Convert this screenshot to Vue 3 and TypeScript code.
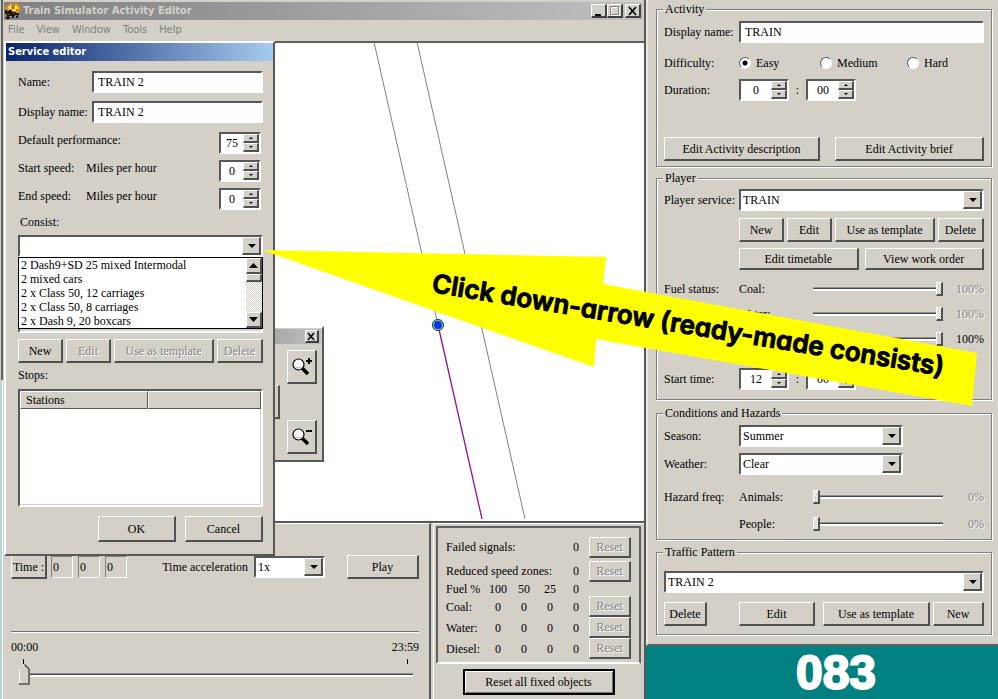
<script setup lang="ts">
import { ref } from 'vue'

interface FuelRow {
  name: string
  counts: number[]
}

interface SliderRow {
  id: string
  name: string
  value: number
  disabled: boolean
}

const menus = ['File', 'View', 'Window', 'Tools', 'Help']

const serviceName = ref('TRAIN 2')
const serviceDisplayName = ref('TRAIN 2')
const performance = ref('75')
const startSpeed = ref('0')
const endSpeed = ref('0')
const consists = [
  '2 Dash9+SD 25 mixed Intermodal',
  '2 mixed cars',
  '2 x Class 50, 12 carriages',
  '2 x Class 50, 8 carriages',
  '2 x Dash 9, 20 boxcars',
]

const clock = ref(['0', '0', '0'])
const timeline = ref(0)

const fuelLevels = [100, 50, 25, 0]
const fuelRows: FuelRow[] = [
  { name: 'Coal:', counts: [0, 0, 0, 0] },
  { name: 'Water:', counts: [0, 0, 0, 0] },
  { name: 'Diesel:', counts: [0, 0, 0, 0] },
]

const activityName = ref('TRAIN')
const difficulty = ref('Easy')
const difficulties = ['Easy', 'Medium', 'Hard']
const durationHours = ref('0')
const durationMinutes = ref('00')
const startHours = ref('12')
const startMinutes = ref('00')

const fuelStatus = ref<SliderRow[]>([
  { id: 'coal', name: 'Coal:', value: 100, disabled: true },
  { id: 'water', name: 'Water:', value: 100, disabled: true },
  { id: 'diesel', name: 'Diesel:', value: 100, disabled: false },
])
const hazards = ref<SliderRow[]>([
  { id: 'animals', name: 'Animals:', value: 0, disabled: true },
  { id: 'people', name: 'People:', value: 0, disabled: true },
])
</script>

<template>
  <div class="desktop">
    <div class="edge" aria-hidden="true">
      <div class="edge-upper"></div>
      <div class="edge-lower"></div>
    </div>

    <main class="editor">
      <header class="titlebar">
        <svg class="app-icon" width="18" height="18" viewBox="0 0 18 18" aria-hidden="true">
          <path d="M2 3h3V1h3v2h2V1h4v2h2v2h1v4h-2v2H3V9H1V5h1z" fill="#d98a1c" />
          <path d="M4 4h2V2h1v3h4V3h2v2h2v2h-3v2H7V7H4z" fill="#ffd83d" />
          <path d="M1 8h2v1h2V8h3v2h4v1h3v2h-1v3h-2v-2h-2v2H8v-2H6v3H2v-2h1v-3H1z" fill="#1c1612" />
          <path d="M9 11h2v1H9zM4 12h2v1H4zM8 5h2v2H8z" fill="#a82c14" />
          <path d="M5 14h2v1H5zM11 13h2v1h-2z" fill="#8b8b8b" />
        </svg>
        <h1>Train Simulator Activity Editor</h1>
        <button class="sys" aria-label="Minimize">
          <svg width="12" height="10" viewBox="0 0 12 10"><path d="M2 8h6v2H2z" /></svg>
        </button>
        <button class="sys" aria-label="Maximize" disabled>
          <svg width="12" height="10" viewBox="0 0 12 10">
            <path d="M2.500 1v8.500h8v-8h-8" fill="none" stroke="#fff" />
            <path d="M1.500 .5h8v8h-8z" fill="none" stroke="#808080" />
          </svg>
        </button>
        <button class="sys close" aria-label="Close">
          <svg width="12" height="10" viewBox="0 0 12 10"><path d="M2 1l7 8M9 1l-7 8" stroke="#000" stroke-width="1.700" /></svg>
        </button>
      </header>

      <nav class="menubar">
        <a v-for="m in menus" :key="m" href="#">{{ m }}</a>
      </nav>

      <section class="map">
        <svg class="tracks" width="640" height="478" viewBox="4 43 640 478" aria-hidden="true">
          <path d="M374 42L438 325M417 42L525 519" stroke="#808080" fill="none" />
          <path d="M438 325L482 519" stroke="#90109a" stroke-width="1.300" fill="none" />
          <circle cx="438" cy="325" r="5.500" fill="#7fd8b0" stroke="#063c14" />
          <circle cx="438" cy="325" r="4" fill="#1030f0" />
        </svg>
      </section>

      <div class="bottom">
        <section class="playback">
          <div class="clock">
            <button class="btn time-btn">Time :</button>
            <input v-for="(c, i) in clock" :key="i" v-model="clock[i]" class="digit" :aria-label="'Time part ' + (i + 1)" />
            <label for="accel">Time acceleration</label>
            <span class="combo accel">
              <select id="accel"><option>1x</option></select>
            </span>
            <button class="btn play">Play</button>
          </div>
          <hr />
          <div class="ends"><span>00:00</span><span>23:59</span></div>
          <div class="ticks"><i></i><i></i></div>
          <input v-model="timeline" class="timeline" type="range" min="0" max="1439" aria-label="Timeline" />
        </section>

        <section class="status">
          <div class="status-box">
            <table>
              <colgroup>
                <col class="c-name" /><col v-for="n in 4" :key="n" class="c-num" /><col class="c-btn" />
              </colgroup>
              <tbody>
                <tr class="tall">
                  <th colspan="4">Failed signals:</th><td>0</td>
                  <td><button class="btn reset" disabled>Reset</button></td>
                </tr>
                <tr class="tall">
                  <th colspan="4">Reduced speed zones:</th><td>0</td>
                  <td><button class="btn reset" disabled>Reset</button></td>
                </tr>
                <tr class="levels">
                  <th>Fuel %</th>
                  <td v-for="l in fuelLevels" :key="l">{{ l }}</td><td></td>
                </tr>
                <tr v-for="r in fuelRows" :key="r.name">
                  <th>{{ r.name }}</th>
                  <td v-for="(c, i) in r.counts" :key="i">{{ c }}</td>
                  <td><button class="btn reset" disabled>Reset</button></td>
                </tr>
              </tbody>
            </table>
          </div>
          <button class="btn reset-all">Reset all fixed objects</button>
        </section>
      </div>

      <section class="window palette" aria-label="Map tools">
        <header><button class="sys close" aria-label="Close tools">
          <svg width="9" height="9" viewBox="0 0 9 9"><path d="M1 1l6 7M7 1l-6 7" stroke="#000" stroke-width="1.600" /></svg>
        </button></header>
        <div class="tools">
          <button class="btn pan" aria-label="Pan right">
            <svg width="6" height="8" viewBox="0 0 6 8"><path d="M1 0l4 4-4 4z" /></svg>
          </button>
          <div class="zooms">
            <button v-for="sign in ['in', 'out']" :key="sign" class="btn" :aria-label="'Zoom ' + sign">
              <svg width="22" height="20" viewBox="0 0 22 20">
                <path d="M11 11l6 6" stroke="#000" stroke-width="3.500" />
                <circle cx="7.500" cy="7.500" r="5.500" fill="#fff" stroke="#000" stroke-width="1.200" />
                <path d="M4.500 9.500a4 4 0 0 0 6 0" fill="none" stroke="#b0b0b0" />
                <path d="M15 3h6v2h-6z" />
                <path v-if="sign === 'in'" d="M17 1h2v6h-2z" />
              </svg>
            </button>
          </div>
        </div>
      </section>

      <section class="window service" role="dialog" aria-labelledby="service-title">
        <h2 id="service-title">Service editor</h2>
        <form @submit.prevent>
          <div class="field">
            <label for="svc-name">Name:</label>
            <input id="svc-name" v-model="serviceName" class="text" />
          </div>
          <div class="field">
            <label for="svc-display">Display name:</label>
            <input id="svc-display" v-model="serviceDisplayName" class="text" />
          </div>
          <div class="field speed">
            <label for="perf" class="wide">Default performance:</label>
            <span class="spin">
              <input id="perf" v-model="performance" />
              <span><button aria-label="Up"></button><button class="down" aria-label="Down"></button></span>
            </span>
          </div>
          <div class="field speed">
            <label for="start-speed">Start speed:</label><span>Miles per hour</span>
            <span class="spin">
              <input id="start-speed" v-model="startSpeed" />
              <span><button aria-label="Up"></button><button class="down" aria-label="Down"></button></span>
            </span>
          </div>
          <div class="field speed">
            <label for="end-speed">End speed:</label><span>Miles per hour</span>
            <span class="spin">
              <input id="end-speed" v-model="endSpeed" />
              <span><button aria-label="Up"></button><button class="down" aria-label="Down"></button></span>
            </span>
          </div>
          <label for="consist" class="consist-label">Consist:</label>
          <div class="consist">
            <span class="combo">
              <select id="consist"><option></option></select>
            </span>
            <div class="dropdown">
              <ul role="listbox" aria-label="Consist">
                <li v-for="c in consists" :key="c" role="option">{{ c }}</li>
              </ul>
              <div class="scroll">
                <button aria-label="Scroll up"><svg width="9" height="5" viewBox="0 0 9 5"><path d="M0 5h9L4.500 0z" /></svg></button>
                <i></i>
                <button class="last" aria-label="Scroll down"><svg width="9" height="5" viewBox="0 0 9 5"><path d="M0 0h9L4.500 5z" /></svg></button>
              </div>
            </div>
            <div class="consist-box"></div>
          </div>
          <div class="actions">
            <button class="btn">New</button>
            <button class="btn" disabled>Edit</button>
            <button class="btn" disabled>Use as template</button>
            <button class="btn" disabled>Delete</button>
          </div>
          <p>Stops:</p>
          <div class="stops">
            <table>
              <thead><tr><th>Stations</th><th></th></tr></thead>
            </table>
          </div>
          <div class="confirm">
            <button class="btn">OK</button>
            <button class="btn">Cancel</button>
          </div>
        </form>
      </section>
    </main>

    <aside class="side">
      <div class="panel">
        <fieldset class="activity">
          <legend>Activity</legend>
          <div class="row">
            <label for="act-name">Display name:</label>
            <input id="act-name" v-model="activityName" class="text" />
          </div>
          <div class="row difficulty">
            <span>Difficulty:</span>
            <div class="radios">
              <label v-for="d in difficulties" :key="d">
                <input v-model="difficulty" type="radio" name="difficulty" :value="d" />{{ d }}
              </label>
            </div>
          </div>
          <div class="row">
            <label for="dur">Duration:</label>
            <div class="times">
              <span class="spin">
                <input id="dur" v-model="durationHours" />
                <span><button aria-label="Up"></button><button class="down" aria-label="Down"></button></span>
              </span>
              <b>:</b>
              <span class="spin">
                <input v-model="durationMinutes" aria-label="Duration minutes" />
                <span><button aria-label="Up"></button><button class="down" aria-label="Down"></button></span>
              </span>
            </div>
          </div>
          <div class="edit-pair">
            <button class="btn">Edit Activity description</button>
            <button class="btn">Edit Activity brief</button>
          </div>
        </fieldset>

        <fieldset class="player">
          <legend>Player</legend>
          <div class="row">
            <label for="player-service">Player service:</label>
            <span class="combo"><select id="player-service"><option>TRAIN</option></select></span>
          </div>
          <div class="actions indent">
            <button class="btn">New</button>
            <button class="btn">Edit</button>
            <button class="btn">Use as template</button>
            <button class="btn">Delete</button>
          </div>
          <div class="wide-pair indent">
            <button class="btn">Edit timetable</button>
            <button class="btn">View work order</button>
          </div>
          <div class="sliders fuel">
            <template v-for="(s, i) in fuelStatus" :key="s.id">
              <span>{{ i === 0 ? 'Fuel status:' : '' }}</span>
              <label :for="s.id">{{ s.name }}</label>
              <input :id="s.id" v-model="s.value" type="range" :disabled="s.disabled" />
              <output :class="{ dim: s.disabled }">{{ s.value }}%</output>
            </template>
          </div>
          <div class="row">
            <label for="start-time">Start time:</label>
            <div class="times">
              <span class="spin">
                <input id="start-time" v-model="startHours" />
                <span><button aria-label="Up"></button><button class="down" aria-label="Down"></button></span>
              </span>
              <b>:</b>
              <span class="spin">
                <input v-model="startMinutes" aria-label="Start minutes" />
                <span><button aria-label="Up"></button><button class="down" aria-label="Down"></button></span>
              </span>
            </div>
          </div>
        </fieldset>

        <fieldset class="conditions">
          <legend>Conditions and Hazards</legend>
          <div class="row">
            <label for="season">Season:</label>
            <span class="combo short"><select id="season"><option>Summer</option></select></span>
          </div>
          <div class="row">
            <label for="weather">Weather:</label>
            <span class="combo short"><select id="weather"><option>Clear</option></select></span>
          </div>
          <div class="sliders">
            <template v-for="(s, i) in hazards" :key="s.id">
              <span>{{ i === 0 ? 'Hazard freq:' : '' }}</span>
              <label :for="s.id">{{ s.name }}</label>
              <input :id="s.id" v-model="s.value" type="range" :disabled="s.disabled" />
              <output :class="{ dim: s.disabled }">{{ s.value }}%</output>
            </template>
          </div>
        </fieldset>

        <fieldset class="traffic">
          <legend>Traffic Pattern</legend>
          <span class="combo"><select aria-label="Traffic pattern"><option>TRAIN 2</option></select></span>
          <div class="traffic-actions">
            <button class="btn delete">Delete</button>
            <button class="btn edit">Edit</button>
            <button class="btn template">Use as template</button>
            <button class="btn">New</button>
          </div>
        </fieldset>
      </div>
      <footer>083</footer>
    </aside>

    <svg class="callout" width="998" height="420" viewBox="0 0 998 420">
      <path d="M262 250L606 257L603 284L977 353L972 406L596 339L594 367z" fill="#ff0" />
      <text x="431" y="292" transform="rotate(9.300 431 292)">Click down-arrow (ready-made consists)</text>
    </svg>
  </div>
</template>

<style>
body {
  margin: 0;
  background: #d4d0c8;
}
</style>

<style scoped>
* {
  box-sizing: border-box;
}
.desktop {
  position: relative;
  display: grid;
  grid-template-columns: 4px minmax(0, 1fr) 352px;
  min-height: 100vh;
  overflow: hidden;
  background: #d4d0c8;
  color: #000;
  font: 12px/16px 'Liberation Serif', 'Times New Roman', serif;
}
button,
input,
select {
  margin: 0;
  padding: 0;
  font: inherit;
  color: inherit;
  border-radius: 0;
}

/* shared controls */
.btn {
  height: 24px;
  background: #d4d0c8;
  border: solid;
  border-width: 1px 2px 2px 1px;
  border-color: #fff #505050 #505050 #fff;
  white-space: nowrap;
}
.btn:disabled,
.dim {
  color: #858585;
  text-shadow: 1px 1px 0 #fff;
}
.text {
  width: 100%;
  min-width: 0;
  height: 22px;
  padding-left: 4px;
  background: #fff;
  border: 2px solid;
  border-color: #585858 #fff #fff #585858;
}
.combo {
  position: relative;
  display: block;
  height: 22px;
  background: #fff;
  border: 2px solid;
  border-color: #585858 #fff #fff #585858;
}
.combo select {
  display: block;
  width: 100%;
  height: 100%;
  padding-left: 2px;
  background: transparent;
  border: 0;
  appearance: none;
}
.combo::before {
  content: '';
  position: absolute;
  top: 0;
  right: 0;
  bottom: 0;
  width: 16px;
  background: #d4d0c8;
  border: solid;
  border-width: 1px 2px 2px 1px;
  border-color: #fff #505050 #505050 #fff;
  pointer-events: none;
}
.combo::after {
  content: '';
  position: absolute;
  top: 7px;
  right: 5px;
  border: 4px solid transparent;
  border-top-color: #000;
  border-bottom: 0;
  pointer-events: none;
}
.spin {
  display: flex;
  width: 50px;
  height: 22px;
  background: #fff;
  border: 2px solid;
  border-color: #585858 #fff #fff #585858;
}
.spin input {
  flex: 1;
  min-width: 0;
  border: 0;
  background: transparent;
  text-align: center;
}
.spin > span {
  display: flex;
  flex-direction: column;
  width: 16px;
}
.spin button {
  flex: 1;
  display: grid;
  place-items: center;
  background: #d4d0c8;
  border: solid;
  border-width: 1px 2px 2px 1px;
  border-color: #fff #505050 #505050 #fff;
}
.spin button::after {
  content: '';
  border: 2px solid transparent;
  border-bottom-color: #000;
  border-top: 0;
}
.spin button.down::after {
  border-top: 2px solid #000;
  border-bottom: 0;
}

/* main window */
.edge {
  display: flex;
  flex-direction: column;
}
.edge-upper {
  height: 380px;
  width: 3px;
  border-left: 1px solid #d4d0c8;
  background: #606060;
}
.edge-lower {
  flex: 1;
  width: 3px;
  background: #b4d8d4;
  border-right: 1px solid #fff;
}
.editor {
  position: relative;
  display: flex;
  flex-direction: column;
  border-right: 2px solid #585858;
}
.titlebar {
  display: flex;
  align-items: center;
  height: 18px;
  margin: 2px 1px 0 0;
  padding-right: 2px;
  background: linear-gradient(90deg, #808080, #c0c0c0);
}
.app-icon {
  margin-right: 1px;
}
h1 {
  flex: 1;
  margin: 0;
  color: #d4d0c8;
  font: bold 11px/16px 'DejaVu Sans Condensed', 'DejaVu Sans', sans-serif;
}
.sys {
  display: grid;
  place-items: center;
  width: 16px;
  height: 14px;
  background: #d4d0c8;
  border: solid;
  border-width: 1px 2px 2px 1px;
  border-color: #fff #404040 #404040 #fff;
}
.titlebar .close {
  margin-left: 2px;
}
.menubar {
  display: flex;
  gap: 12px;
  height: 21px;
  padding: 2px 4px;
  font: 11px/16px 'DejaVu Sans Condensed', 'DejaVu Sans', sans-serif;
}
.menubar a {
  color: #808080;
  text-decoration: none;
}
.map {
  flex: 1;
  min-height: 478px;
  background: #fff;
  border-top: 2px solid #606060;
  overflow: hidden;
}
.tracks {
  display: block;
}
.bottom {
  display: grid;
  grid-template-columns: minmax(0, 1fr) 213px;
  height: 178px;
  border-top: 2px solid #585858;
}
.playback {
  padding: 31px 10px 0 7px;
  border-top: 1px solid #fff;
  border-right: 2px solid #585858;
}
.clock {
  display: flex;
  align-items: center;
  height: 24px;
}
.time-btn {
  width: 36px;
  margin-right: 4px;
}
.digit {
  width: 22px;
  height: 22px;
  margin-right: 5px;
  padding-left: 1px;
  background: transparent;
  border: 1px solid;
  border-color: #808080 #fff #fff #808080;
}
.clock label {
  margin-left: auto;
  margin-right: 6px;
}
.accel {
  width: 71px;
}
.play {
  width: 72px;
  margin-left: 22px;
}
hr {
  height: 2px;
  margin: 52px 0 6px;
  border: 0;
  border-top: 1px solid #707070;
  border-bottom: 1px solid #fff;
}
.ends {
  display: flex;
  justify-content: space-between;
}
.ticks {
  display: flex;
  justify-content: space-between;
  margin: 4px 11px 0 12px;
}
.ticks i {
  width: 1px;
  height: 5px;
  background: #000;
}
input[type='range'] {
  display: block;
  width: 100%;
  height: 16px;
  background: transparent;
  appearance: none;
}
input[type='range']::-webkit-slider-runnable-track {
  height: 4px;
  background: #484848;
  border-top: 1px solid #909090;
  border-bottom: 2px solid #fff;
}
input[type='range']::-webkit-slider-thumb {
  appearance: none;
  width: 7px;
  height: 14px;
  margin-top: -6px;
  background: #d4d0c8;
  border: solid;
  border-width: 1px 2px 2px 1px;
  border-color: #fff #505050 #505050 #fff;
}
input[type='range']:disabled::-webkit-slider-thumb {
  background: repeating-conic-gradient(#fff 0 25%, #d4d0c8 0 50%) 0 0 / 2px 2px;
}
input.timeline {
  width: calc(100% - 14px);
  height: 22px;
  margin: 0 6px 0 8px;
}
input.timeline::-webkit-slider-thumb {
  width: 11px;
  height: 21px;
  margin-top: -10px;
  border: 0;
  background: url("data:image/svg+xml,%3Csvg xmlns='http://www.w3.org/2000/svg' width='11' height='21'%3E%3Cpath d='M0 5L5 0h1l5 5v16H0z' fill='%23d4d0c8'/%3E%3Cpath d='M.5 20V5.500L5.500.5' fill='none' stroke='%23fff'/%3E%3Cpath d='M5.500.5L10 5v15H0' fill='none' stroke='%23505050' stroke-width='1.500'/%3E%3C/svg%3E") no-repeat;
}
.status {
  display: flex;
  flex-direction: column;
  align-items: center;
  margin-left: 2px;
  padding: 2px 3px 0 2px;
  border-top: 1px solid #fff;
  border-left: 1px solid #fff;
}
.status-box {
  width: 100%;
  height: 138px;
  padding: 7px 8px 0 8px;
  border: 2px solid;
  border-color: #606060 #606060 #fff #606060;
}
.status table {
  width: 100%;
  border-collapse: collapse;
  table-layout: fixed;
}
.c-num {
  width: 26px;
}
.c-btn {
  width: 42px;
}
.status th,
.status td {
  height: 21px;
  padding: 0;
  font-weight: normal;
  text-align: center;
  white-space: nowrap;
}
.status th {
  text-align: left;
}
.status .tall > * {
  height: 24px;
}
.status .levels > * {
  height: 13px;
  line-height: 13px;
}
.reset {
  display: block;
  width: 100%;
  height: 21px;
}
.reset-all {
  width: 152px;
  height: 26px;
  margin-top: 5px;
  border: 2px solid #000;
  box-shadow: inset 1px 1px 0 #fff, inset -1px -1px 0 #707070;
}

/* floating windows */
.window {
  position: absolute;
  background: #d4d0c8;
  border: 2px solid;
  border-color: #fff #585858 #585858 #fff;
}
.palette {
  top: 326px;
  left: 186px;
  width: 134px;
}
.palette header {
  display: flex;
  justify-content: flex-end;
  align-items: center;
  height: 15px;
  margin: 1px;
  padding-right: 2px;
  background: linear-gradient(90deg, #808080, #c0c0c0);
}
.palette .sys {
  width: 14px;
  height: 13px;
}
.tools {
  display: flex;
  justify-content: flex-end;
  align-items: center;
  gap: 7px;
  padding: 5px 5px 6px;
}
.pan {
  width: 32px;
  height: 34px;
}
.zooms {
  display: grid;
  gap: 36px;
}
.zooms .btn {
  display: grid;
  place-items: center;
  width: 30px;
  height: 34px;
}
.service {
  top: 41px;
  left: 0;
  width: 271px;
}
h2 {
  height: 18px;
  margin: 0;
  padding-left: 2px;
  background: linear-gradient(90deg, #0a246a, #a6caf0);
  color: #fff;
  font: bold 11px/18px 'DejaVu Sans Condensed', 'DejaVu Sans', sans-serif;
}
form {
  display: flex;
  flex-direction: column;
  padding: 10px 10px 12px 12px;
}
.field {
  display: grid;
  grid-template-columns: 74px 1fr;
  align-items: center;
  height: 22px;
  margin-bottom: 8px;
  white-space: nowrap;
}
.speed {
  grid-template-columns: 68px 1fr 44px;
  align-items: start;
  margin: 1px 0 5px;
}
.speed .wide {
  grid-column: 1 / 3;
}
.service .spin {
  width: 42px;
}
.consist-label {
  margin: 0 0 6px 2px;
  line-height: 14px;
}
.consist {
  position: relative;
  height: 98px;
}
.consist-box {
  height: 76px;
  border: 2px solid;
  border-color: #585858 #fff #fff #585858;
}
.dropdown {
  position: absolute;
  top: 22px;
  left: 0;
  right: 0;
  display: flex;
  height: 72px;
  background: #fff;
  border: 1px solid #000;
}
.dropdown ul {
  flex: 1;
  margin: 0;
  padding: 0 2px;
  list-style: none;
  line-height: 14px;
}
.scroll {
  display: flex;
  flex-direction: column;
  width: 16px;
  background: repeating-conic-gradient(#fff 0 25%, #d4d0c8 0 50%) 0 0 / 2px 2px;
}
.scroll button,
.scroll i {
  display: grid;
  place-items: center;
  height: 16px;
  background: #d4d0c8;
  border: solid;
  border-width: 1px 2px 2px 1px;
  border-color: #fff #505050 #505050 #fff;
}
.scroll i {
  height: 8px;
}
.scroll .last {
  margin-top: auto;
}
.actions {
  display: grid;
  grid-template-columns: 45px 45px 1fr 46px;
  gap: 3px;
}
.service .actions {
  margin-top: 6px;
}
p {
  margin: 4px 0 6px;
}
.stops {
  height: 118px;
  background: #fff;
  border: 2px solid;
  border-color: #585858 #fff #fff #585858;
  box-shadow: inset -1px -1px 0 #d4d0c8;
}
.stops table {
  width: 100%;
  border-collapse: separate;
  border-spacing: 0;
}
.stops th {
  width: 128px;
  height: 18px;
  padding: 0 5px;
  background: #d4d0c8;
  border: 1px solid;
  border-color: #fff #585858 #585858 #fff;
  font-weight: normal;
  text-align: left;
}
.stops th + th {
  width: auto;
}
.confirm {
  display: flex;
  justify-content: flex-end;
  gap: 9px;
  margin-top: 9px;
}
.confirm .btn {
  width: 78px;
  height: 26px;
}

/* side panel */
.side {
  display: flex;
  flex-direction: column;
}
.panel {
  padding: 2px 6px 9px 8px;
  border-left: 2px solid #e8e6e0;
  border-bottom: 2px solid #606060;
}
fieldset {
  min-width: 0;
  margin: 0 0 4px;
  padding: 5px 7px 3px;
  border: 1px solid #808080;
  box-shadow: 1px 1px 0 #fff, inset 1px 1px 0 #fff;
}
legend {
  margin-left: -1px;
  padding: 0 2px;
  background: #d4d0c8;
  line-height: 14px;
}
.row {
  display: grid;
  grid-template-columns: 75px 1fr;
  align-items: center;
  white-space: nowrap;
}
.indent {
  margin-left: 75px;
}
.difficulty {
  margin: 12px 0 8px;
}
.radios {
  display: grid;
  grid-template-columns: 81px 87px 1fr;
}
.radios label {
  display: flex;
  align-items: center;
  gap: 5px;
}
.radios input {
  width: 12px;
  height: 12px;
  appearance: none;
  border: 1px solid;
  border-color: #606060 #fff #fff #606060;
  border-radius: 50%;
  background: #fff;
}
.radios input:checked {
  background: radial-gradient(circle, #000 0 2px, #fff 3px);
}
.times {
  display: flex;
  align-items: center;
}
.times b {
  width: 17px;
  font-weight: normal;
  text-align: center;
}
.edit-pair {
  display: grid;
  grid-template-columns: 156px 1fr;
  gap: 15px;
  margin-top: 36px;
}
.activity {
  padding-bottom: 5px;
}
.player {
  margin-bottom: 6px;
  padding-top: 4px;
  padding-bottom: 9px;
}
.player .actions {
  margin-top: 7px;
}
.wide-pair {
  display: grid;
  grid-template-columns: 1fr 1fr;
  gap: 6px;
  margin-top: 6px;
}
.wide-pair .btn {
  height: 22px;
}
.sliders {
  display: grid;
  grid-template-columns: 75px 74px 130px 1fr;
  row-gap: 11px;
  align-items: center;
  margin-top: 14px;
}
.sliders output {
  text-align: right;
}
.fuel {
  row-gap: 9px;
  margin: 11px 0 21px;
}
.conditions .row {
  margin-bottom: 6px;
}
.conditions {
  margin-bottom: 5px;
  padding-bottom: 7px;
}
.short {
  width: 164px;
}
.traffic {
  margin-bottom: 0;
  padding-top: 12px;
  padding-bottom: 8px;
}
.traffic-actions {
  display: grid;
  grid-template-columns: 75px 84px 1fr 51px;
  margin-top: 9px;
}
.traffic-actions .delete {
  width: 43px;
}
.traffic-actions .edit {
  width: 76px;
}
.traffic-actions .template {
  margin-right: 3px;
}
footer {
  flex: 1;
  display: grid;
  place-items: center;
  padding-left: 28px;
  background: #008080;
  color: #fff;
  font: bold 48px/50px 'Liberation Sans', Arial, sans-serif;
  -webkit-text-stroke: 2px #fff;
}
.callout {
  position: absolute;
  top: 0;
  left: 0;
  pointer-events: none;
}
.callout text {
  font: 600 26px Inter, 'Liberation Sans', sans-serif;
  font-feature-settings: 'cv11' 1;
  stroke: #000;
  stroke-linejoin: round;
}
</style>
